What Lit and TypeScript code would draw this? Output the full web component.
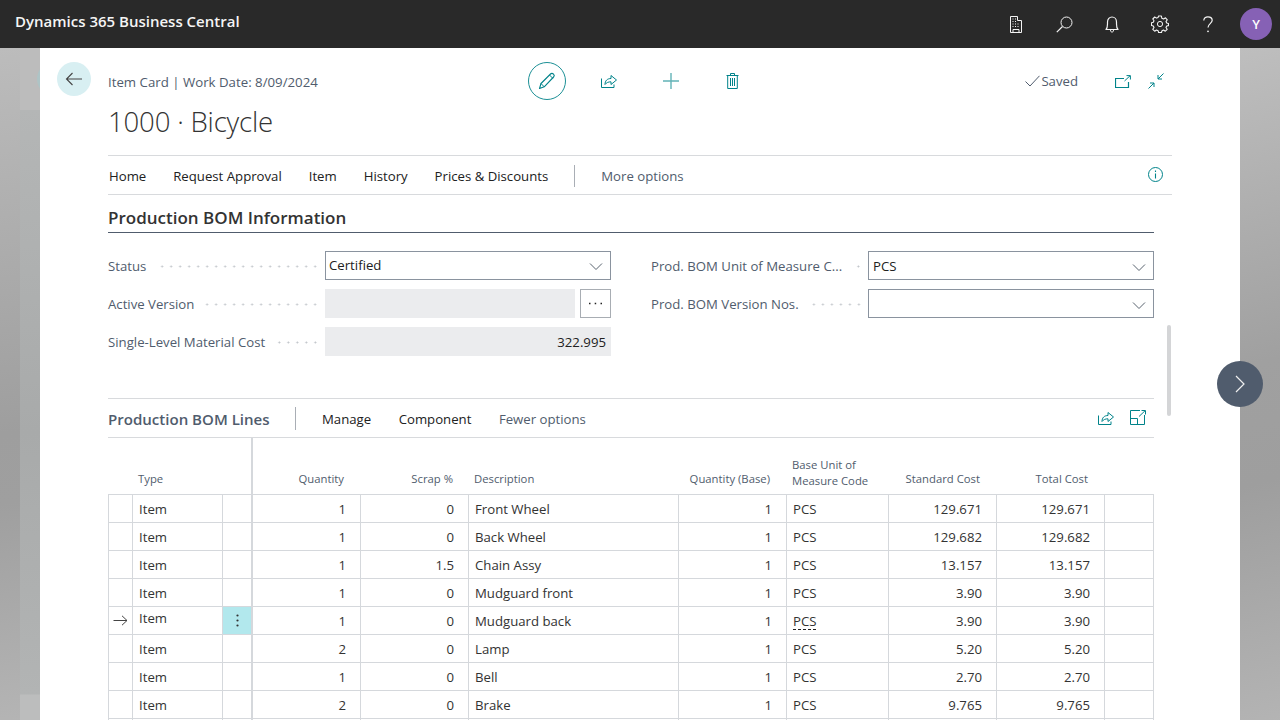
import { LitElement, html, css, svg } from "lit";
import { customElement } from "lit/decorators.js";

const ic = (w: number, h: number, vb: string, body: unknown, cls = "") =>
  html`<svg class=${cls} width=${w} height=${h} viewBox=${vb} fill="none" stroke="currentColor" stroke-width="1" aria-hidden="true">${body}</svg>`;

const shareBody = svg`<path d="M1.5 6.5V15.5H14V12.5"/><path d="M5 12.5C5 8.5 7.5 6.5 11 6.5V3.5L16.5 8L11 12.5V9.8C8.5 9.8 6.5 10.5 5 12.5Z" stroke-linejoin="round"/>`;
const chevronDown = svg`<path d="M1 1.5L7 7.5L13 1.5"/>`;

interface Row { q: string; s: string; d: string; c: string; active?: boolean }
const rows: Row[] = [
  { q: "1", s: "0", d: "Front Wheel", c: "129.671" },
  { q: "1", s: "0", d: "Back Wheel", c: "129.682" },
  { q: "1", s: "1.5", d: "Chain Assy", c: "13.157" },
  { q: "1", s: "0", d: "Mudguard front", c: "3.90" },
  { q: "1", s: "0", d: "Mudguard back", c: "3.90", active: true },
  { q: "2", s: "0", d: "Lamp", c: "5.20" },
  { q: "1", s: "0", d: "Bell", c: "2.70" },
  { q: "2", s: "0", d: "Brake", c: "9.765" },
];

@customElement("app-root")
export class AppRoot extends LitElement {
  static styles = css`
    :host { display: block; width: 1280px; height: 720px; overflow: hidden; position: relative;
      font-family: "Open Sans", "Liberation Sans", sans-serif; font-size: 13.2px; color: #212121; background: #aaa; }
    * { box-sizing: border-box; }
    svg { display: block; flex: none; }
    .bar { height: 48px; background: #292929; color: #fff; display: flex; align-items: center; padding: 0 8px 0 15px; }
    .brand { font-size: 15px; font-weight: 600; flex: 1; color: #f5f5f5; margin-top: -6px; }
    .bar-icons { display: flex; align-items: center; }
    .bar-icon { width: 48px; height: 48px; display: flex; align-items: center; justify-content: center; color: #f4f4f4; }
    .avatar { width: 32px; height: 32px; border-radius: 50%; background: #8661b5; color: #fff; font-weight: 600; font-size: 13px;
      display: flex; align-items: center; justify-content: center; margin-left: 8px; }
    .main { height: 672px; display: grid; grid-template-columns: 20px 20px 1200px 40px; }
    .strip1 { background: linear-gradient(172deg, #bcbcbc 0%, #9e9e9e 55%, #9f9f9f 65%, #b7b7b7 100%); }
    .strip2 { position: relative; overflow: hidden;
      background: linear-gradient(180deg, #bcbcbc 0, #bcbcbc 62px, #b4b6b6 62px, #a8aaaa 55%, #b2b4b4 646px, #bcbdbd 647px, #bcbdbd 100%); }
    .ghost { position: absolute; left: 17px; top: 14px; width: 34px; height: 34px; border-radius: 50%; background: #aec4c6; }
    .strip3 { background: linear-gradient(165deg, #bebebe 0%, #a0a0a0 45%, #9e9e9e 62%, #b6b6b6 100%); }
    .sheet { background: #fff; padding: 14px 68px 0 17px; display: grid; grid-template-columns: 51px 1fr; align-content: start; position: relative; }
    .back { width: 34px; height: 34px; border-radius: 50%; background: #d8eff2; color: #444; display: flex; align-items: center; justify-content: center; }
    .head { display: grid; grid-template-columns: 420px 1fr auto; height: 40px; }
    .crumb { color: #505c6d; padding-top: 10px; line-height: 20px; font-size: 13.25px; }
    .actions { display: flex; align-items: center; height: 38px; color: #00838a; }
    .edit { width: 38px; height: 38px; border: 1px solid #1c9096; border-radius: 50%; display: flex; align-items: center; justify-content: center; color: #00838a; }
    .a-share { margin-left: 34px; margin-top: -2px; }
    .a-plus { margin-left: 46px; color: #62b3b7; }
    .a-trash { margin-left: 47px; }
    .status { display: flex; align-items: center; height: 38px; color: #505c6d; padding-right: 8px; }
    .saved { display: flex; align-items: center; gap: 1px; margin-right: 37px; }
    .s-exp { color: #00838a; margin-right: 17px; }
    .s-col { color: #00838a; }
    .title { font-size: 27.6px; font-weight: 300; line-height: 38px; height: 53px; color: #333; letter-spacing: -0.2px; }
    .menu { height: 40px; border-top: 1px solid #d8dadd; border-bottom: 1px solid #d8dadd; display: flex; align-items: center; padding: 2px 0 0 1px; position: relative; }
    .menu span { margin-right: 26.95px; }
    .menu .sep { width: 1px; height: 22px; background: #a9aeb5; margin: 0 26px 0 -1px; }
    .muted { color: #505c6d; }
    .info { margin-left: auto; color: #00838a; margin-right: 9px; margin-top: -4px; }
    .section { width: 1046px; }
    .sec-title { height: 38px; border-bottom: 1px solid #505c6d; font-size: 17px; font-weight: 600; line-height: 45px; color: #333; white-space: nowrap; }
    .fields { display: grid; grid-template-columns: 503px 503px; column-gap: 40px; row-gap: 9px; padding-top: 18px; height: 165px; align-content: start; }
    .field { display: grid; grid-template-columns: 217px 1fr; height: 29px; align-items: center; }
    .lab { display: flex; align-items: center; color: #505c6d; white-space: nowrap; }
    .dots { flex: 1; height: 3px; margin: 2px 5px 0 10px; background: radial-gradient(circle, #bfc3c8 0.9px, transparent 1.1px) right center / 9px 3px repeat-x; }
    .input { height: 29px; border: 1px solid #8a939f; display: flex; align-items: center; justify-content: space-between; padding: 0 7px 2px 3px; color: #212121; }
    .input.pcs { padding: 0 7px 0 4px; }
    .input svg { color: #59636f; margin-top: 3px; }
    .ro { height: 29px; background: #ebecee; text-align: right; line-height: 30px; padding-right: 5px; }
    .rowbtn { display: flex; gap: 5px; }
    .rowbtn .ro { flex: 1; }
    .more { width: 31px; height: 29px; border: 1px solid #a8adb3; display: flex; align-items: center; justify-content: center; color: #222; }
    .lines { height: 40px; border-top: 1px solid #d8dadd; border-bottom: 1px solid #d8dadd; display: flex; align-items: center; padding-top: 2px; }
    .lines b { font-size: 15.05px; font-weight: 600; color: #505c6d; width: 187px; white-space: nowrap; margin-top: 0; }
    .lines .sep { width: 1px; height: 23px; background: #a9aeb5; margin: -2px 26px 0 0; }
    .lines span { margin-right: 27.5px; }
    .l-ico { display: flex; align-items: center; gap: 16px; margin-left: auto; color: #00838a; margin-right: 8px; margin-top: -4px; }
    .grid { display: grid; grid-template-columns: 25px 90px 30px 108px 108px 210px 108px 102px 108px 108px 49px; }
    .hc { height: 57px; border-bottom: 1px solid #d5d8dc; font-size: 11.3px; color: #505c6d; display: flex; align-items: flex-end; padding-bottom: 7px; line-height: 16px; white-space: nowrap; }
    .hc.r { justify-content: flex-end; text-align: right; }
    .hc.thick { border-right: 2px solid #d5d8dc; }
    .hc.two { padding-bottom: 5px; padding-left: 5px; }
    .c { height: 28px; border-bottom: 1px solid #d5d8dc; border-right: 1px solid #d5d8dc; line-height: 29px; padding: 0 6px; white-space: nowrap; color: #333; }
    .c.first { border-left: 1px solid #d5d8dc; display: flex; align-items: center; justify-content: center; padding: 0; color: #444; }
    .c.thick { border-right: 2px solid #d5d8dc; }
    .c.r { text-align: right; padding-right: 14px; }
    .c.up { line-height: 23px; }
    .c.cy { background: #b2e8ed; display: flex; align-items: center; justify-content: center; padding: 0; color: #333; }
    .dash { text-decoration: underline dashed #212121 1px; text-underline-offset: 3px; }
    .scroll { position: absolute; left: 1127px; top: 277px; width: 4px; height: 91px; border-radius: 2px; background: #d4d5d7; }
    .next { position: absolute; left: 1217px; top: 361px; width: 46px; height: 46px; border-radius: 50%; background: #505c6d; color: #f0f0f0; display: flex; align-items: center; justify-content: center; }
  `;

  render() {
    return html`
      <div class="bar">
        <div class="brand">Dynamics 365 Business Central</div>
        <div class="bar-icons">
          <div class="bar-icon">${ic(14, 17, "0 0 14 17", svg`<path d="M1.5 16.5V.5H8.5V4.5H12.5V16.5Z"/><path d="M4 13.5H10V16.5H4Z"/><path d="M3.5 3h1M6 3h1M3.5 5.5h1M6 5.5h1M3.5 8h1M6 8h1M8.5 8h1M3.5 10.5h1M6 10.5h1M8.5 10.5h1" stroke-width="1.2"/>`)}</div>
          <div class="bar-icon">${ic(17, 17, "0 0 17 17", svg`<circle cx="10.5" cy="6.5" r="5.5"/><path d="M6.5 10.5L.8 16.2" stroke-width="1.2"/>`)}</div>
          <div class="bar-icon">${ic(14, 17, "0 0 14 17", svg`<path d="M1 13.5C2 12.5 2.5 11 2.5 8V6C2.5 3 4.5 1 7 1S11.500 3 11.500 6V8C11.500 11 12 12.500 13 13.500Z" stroke-linejoin="round" stroke-width="1.2"/><path d="M5.500 14C5.500 15.500 6 16 7 16S8.500 15.500 8.500 14"/>`)}</div>
          <div class="bar-icon">${ic(18, 18, "0 0 18 18", svg`<circle cx="9" cy="9" r="2.600"/><path d="M7.600 1H10.400L10.800 3.200L12.600 4L14.500 2.800L16.300 4.800L15 6.600L15.700 8L17.500 8.600V10.600L15.700 11L15 12.500L16.200 14.300L14.300 16.200L12.500 15L11 15.700L10.500 17.500H7.600L7.100 15.700L5.500 15L3.700 16.200L1.800 14.300L3 12.500L2.300 11L.5 10.500V7.800L2.300 7.300L3 5.700L1.800 4L3.700 2L5.500 3.100L7.100 2.400Z" stroke-linejoin="round" stroke-width="1.100"/>`)}</div>
          <div class="bar-icon">${ic(10, 17, "0 0 10 17", svg`<path d="M.8 4.500C.8 2.200 2.600.8 4.900.8S9.200 2.200 9.200 4.300C9.200 7.500 5 7.800 5 11.500" stroke-width="1.200"/><circle cx="5" cy="15.300" r=".9" fill="currentColor" stroke="none"/>`)}</div>
          <div class="avatar">Y</div>
        </div>
      </div>
      <div class="main">
        <div class="strip1"></div>
        <div class="strip2"><div class="ghost"></div></div>
        <div class="sheet">
          <div class="back">${ic(18, 14, "0 0 18 14", svg`<path d="M17 7H1.500M7.500 1L1.500 7L7.500 13" stroke-width="1.100"/>`)}</div>
          <div>
            <div class="head">
              <div class="crumb">Item Card | Work Date: 8/09/2024</div>
              <div class="actions">
                <div class="edit">${ic(18, 18, "0 0 18 18", svg`<path d="M1.500 16.500L3 11.500L12.500 2C13.300 1.200 14.600 1.200 15.500 2.100C16.400 3 16.400 4.200 15.600 5L6.200 14.800Z" stroke-linejoin="round" stroke-width="1.100"/><path d="M3 11.500L6.200 14.800M11.500 3L14.700 6.200"/>`)}</div>
                <div class="a-share">${ic(17, 16, "0 0 17 16", shareBody)}</div>
                <div class="a-plus">${ic(16, 16, "0 0 16 16", svg`<path d="M8 0V16M0 8H16" stroke-width="1.400"/>`)}</div>
                <div class="a-trash">${ic(13, 16, "0 0 13 16", svg`<path d="M.5 2.500H12.500M4.500 2.500V.5H8.500V2.500M1.700 2.500V15.500H11.300V2.500M4.500 5V13M6.500 5V13M8.500 5V13"/>`)}</div>
              </div>
              <div class="status">
                <div class="saved">${ic(15, 12, "0 0 15 12", svg`<path d="M.5 6.500L5 11L14.500.8"/>`)}<span>Saved</span></div>
                <div class="s-exp">${ic(16, 13, "0 0 16 13", svg`<path d="M9 3.500H.5V12.500H13.500V7" stroke-width="1.200"/><path d="M9.500 6L15 .8M11.500.6H15.400V4.500" stroke-width="1"/>`)}</div>
                <div class="s-col">${ic(16, 16, "0 0 16 16", svg`<path d="M15.500.5L10 6M10 2V6H14M.5 15.500L6 10M2 10H6V14"/>`)}</div>
              </div>
            </div>
            <div class="title">1000 · Bicycle</div>
            <div class="menu">
              <span>Home</span><span>Request Approval</span><span>Item</span><span>History</span><span>Prices &amp; Discounts</span>
              <div class="sep"></div><span class="muted">More options</span>
              <div class="info">${ic(15, 15, "0 0 15 15", svg`<circle cx="7.500" cy="7.500" r="7"/><path d="M7.500 6.500V11.500M7.500 3.500V5" stroke-width="1.100"/>`)}</div>
            </div>
            <div class="section">
              <div class="sec-title">Production BOM Information</div>
              <div class="fields">
                <div class="field"><div class="lab">Status<span class="dots"></span></div>
                  <div class="input"><span>Certified</span>${ic(14, 9, "0 0 14 9", chevronDown)}</div></div>
                <div class="field"><div class="lab">Prod. BOM Unit of Measure C...<span class="dots"></span></div>
                  <div class="input pcs"><span>PCS</span>${ic(14, 9, "0 0 14 9", chevronDown)}</div></div>
                <div class="field"><div class="lab">Active Version<span class="dots"></span></div>
                  <div class="rowbtn"><div class="ro"></div><div class="more">${ic(15, 3, "0 0 15 3", svg`<path d="M1 1.500H2.500M6.700 1.500H8.200M12.500 1.500H14" stroke-width="1.500"/>`)}</div></div></div>
                <div class="field"><div class="lab">Prod. BOM Version Nos.<span class="dots"></span></div>
                  <div class="input pcs"><span></span>${ic(14, 9, "0 0 14 9", chevronDown)}</div></div>
                <div class="field"><div class="lab">Single-Level Material Cost<span class="dots"></span></div>
                  <div class="ro">322.995</div></div>
              </div>
              <div class="lines">
                <b>Production BOM Lines</b><div class="sep"></div>
                <span>Manage</span><span>Component</span><span class="muted">Fewer options</span>
                <div class="l-ico">
                  ${ic(17, 16, "0 0 17 16", shareBody)}
                  ${ic(16, 15, "0 0 16 15", svg`<path d="M10 .5H.5V14.500H14.500V5M.5 8.500H7.500V14.500" stroke-width="1"/><path d="M9 6.500L15 .8M11.500.5H15.500V4.500"/>`)}
                </div>
              </div>
              <div class="grid">
                <div class="hc"></div>
                <div class="hc" style="padding-left:5px">Type</div>
                <div class="hc thick"></div>
                <div class="hc r" style="padding-right:17px">Quantity</div>
                <div class="hc r" style="padding-right:16px">Scrap %</div>
                <div class="hc" style="padding-left:5px">Description</div>
                <div class="hc r" style="padding-right:17px">Quantity (Base)</div>
                <div class="hc two">Base Unit of<br />Measure Code</div>
                <div class="hc r" style="padding-right:17px">Standard Cost</div>
                <div class="hc r" style="padding-right:17px">Total Cost</div>
                <div class="hc"></div>
                ${rows.map(
                  (r) => html`
                    <div class="c first">${r.active ? ic(15, 11, "0 0 15 11", svg`<path d="M.5 5.500H14M9 .8L14 5.500L9 10.200"/>`) : ""}</div>
                    <div class="c ${r.active ? "up" : ""}">Item</div>
                    <div class="c thick ${r.active ? "cy" : ""}">${r.active ? ic(3, 13, "0 0 3 13", svg`<circle cx="1.500" cy="1.500" r="1.100" fill="currentColor" stroke="none"/><circle cx="1.500" cy="6.500" r="1.100" fill="currentColor" stroke="none"/><circle cx="1.500" cy="11.500" r="1.100" fill="currentColor" stroke="none"/>`) : ""}</div>
                    <div class="c r">${r.q}</div>
                    <div class="c r">${r.s}</div>
                    <div class="c">${r.d}</div>
                    <div class="c r">1</div>
                    <div class="c"><span class=${r.active ? "dash" : ""}>PCS</span></div>
                    <div class="c r">${r.c}</div>
                    <div class="c r">${r.c}</div>
                    <div class="c"></div>
                  `
                )}
                <div class="c first"></div><div class="c"></div><div class="c thick"></div><div class="c"></div><div class="c"></div><div class="c"></div><div class="c"></div><div class="c"></div><div class="c"></div><div class="c"></div><div class="c"></div>
              </div>
            </div>
          </div>
          <div class="scroll"></div>
        </div>
        <div class="strip3"></div>
      </div>
      <div class="next">${ic(10, 18, "0 0 10 18", svg`<path d="M1 1L9 9L1 17" stroke-width="1.200"/>`)}</div>
    `;
  }
}
